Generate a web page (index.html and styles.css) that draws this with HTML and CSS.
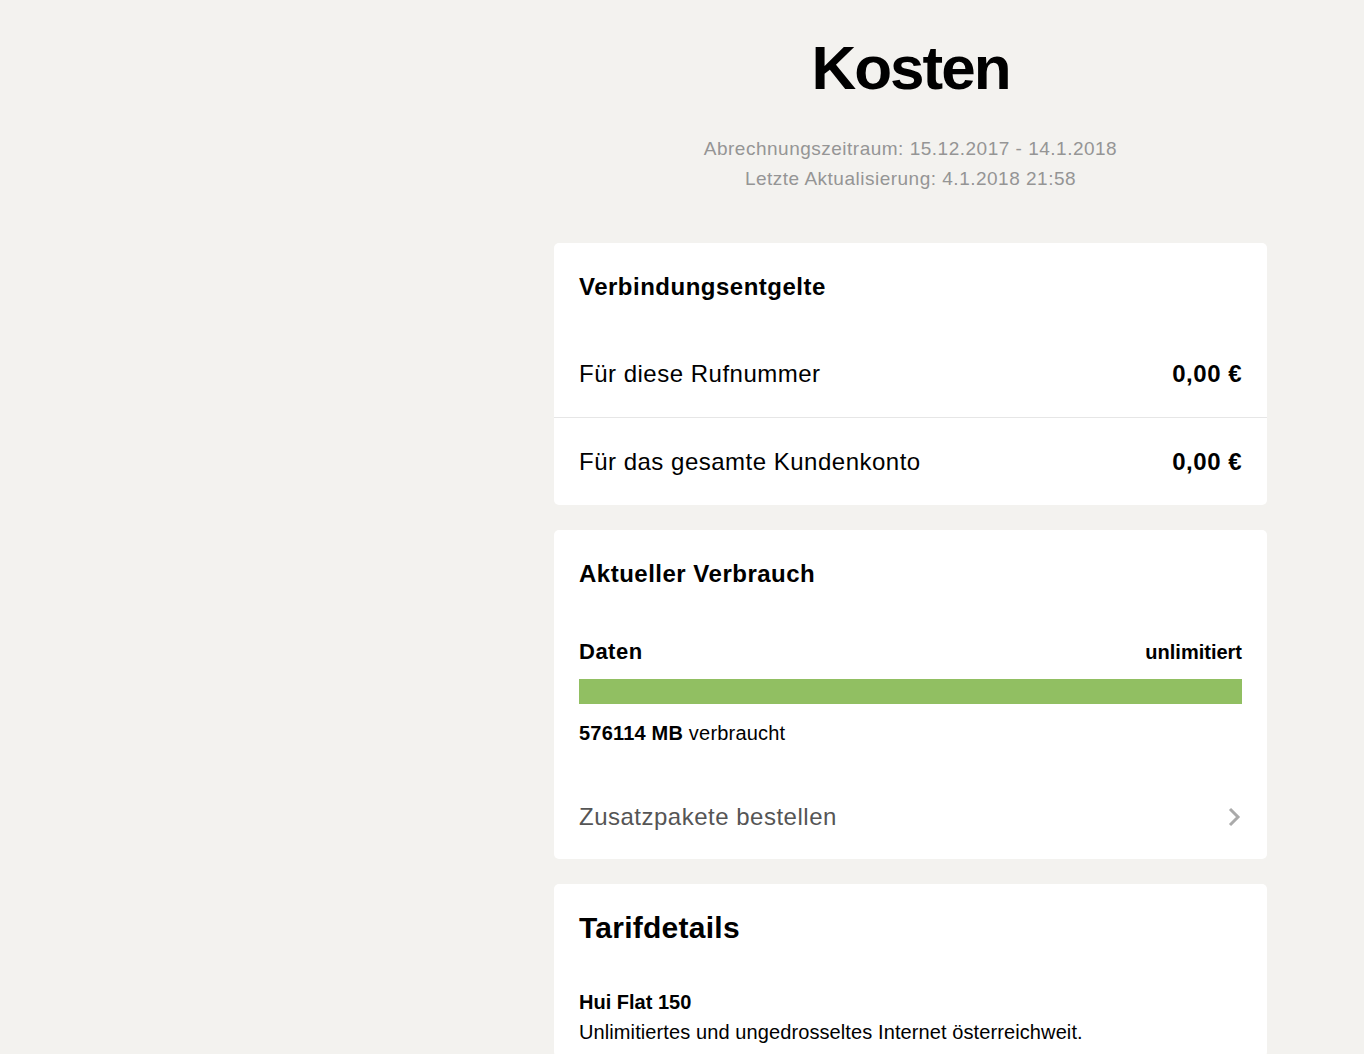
FILE: index.html
```html
<!DOCTYPE html>
<html>
<head lang="de">
  <meta charset="UTF-8">
  <title>Kosten</title>
  <link rel="stylesheet" href="styles.css">
</head>
<body>
  <div class="page">
    <div class="side"></div>
    <div class="main">
      <div class="header">
        <h1>Kosten</h1>
        <p>Abrechnungszeitraum: 15.12.2017 - 14.1.2018</p>
        <p>Letzte Aktualisierung: 4.1.2018 21:58</p>
      </div>

      <!-- Verbindungsentgelte -->
      <div class="card">
        <div class="card-title">Verbindungsentgelte</div>
        <div class="row">
          <span>Für diese Rufnummer</span>
          <b>0,00 €</b>
        </div>
        <div class="row line">
          <span>Für das gesamte Kundenkonto</span>
          <b>0,00 €</b>
        </div>
      </div>

      <!-- Verbrauch -->
      <div class="card">
        <div class="card-title">Aktueller Verbrauch</div>
        <div class="usage">
          <div class="usage-head">
            <span class="usage-name">Daten</span>
            <span class="usage-limit">unlimitiert</span>
          </div>
          <div class="bar"><div class="bar-fill" style="width:100%"></div></div>
          <div class="usage-used"><b>576114 MB</b> verbraucht</div>
        </div>
        <div class="link-row">
          <span>Zusatzpakete bestellen</span>
          <svg width="14" height="20" viewBox="0 0 14 20">
            <polyline points="2,2 10,10 2,18" fill="none" stroke="#aaa" stroke-width="3"/>
          </svg>
        </div>
      </div>

      <!-- Tarif -->
      <div class="card">
        <div class="card-title big">Tarifdetails</div>
        <div class="tarif">
          <div class="tarif-name">Hui Flat 150</div>
          <div>Unlimitiertes und ungedrosseltes Internet österreichweit.</div>
        </div>
      </div>
    </div>
  </div>
</body>
</html>
```

FILE: styles.css
```css
* {
  margin: 0;
  padding: 0;
  box-sizing: border-box;
}
body {
  background: #f3f2ef;
  font-family: "Liberation Sans", Arial, sans-serif;
  color: #000;
  letter-spacing: 0.5px;
}
.page {
  display: flex;
}
.side {
  width: 554px;
  flex-shrink: 0;
}
.main {
  width: 713px;
}
.header {
  text-align: center;
  padding-top: 37px;
  margin-bottom: 49px;
}
.header h1 {
  font-size: 62px;
  line-height: 62px;
  letter-spacing: -2px;
  font-weight: bold;
  margin-bottom: 35px;
}
.header p {
  font-size: 19px;
  line-height: 30px;
  color: #959595;
}
.card {
  background: #fff;
  border-radius: 5px;
  margin-bottom: 25px;
}
.card-title {
  height: 87px;
  display: flex;
  align-items: center;
  padding: 0 25px;
  font-size: 24px;
  font-weight: bold;
}
.card-title.big {
  font-size: 30px;
  letter-spacing: 0.25px;
}
.row {
  height: 87px;
  display: flex;
  align-items: center;
  justify-content: space-between;
  padding: 0 25px;
  font-size: 24px;
}
.row.line {
  height: 88px;
  border-top: 1px solid #e6e6e6;
}
.usage {
  padding: 22px 25px 0;
}
.usage-head {
  display: flex;
  justify-content: space-between;
  align-items: baseline;
  height: 26px;
}
.usage-name {
  font-size: 22px;
  font-weight: bold;
}
.usage-limit {
  font-size: 20px;
  font-weight: bold;
  letter-spacing: 0;
}
.bar {
  margin-top: 14px;
  height: 25px;
  background: #e6e6e6;
}
.bar-fill {
  height: 100%;
  background: #91bf62;
}
.usage-used {
  margin-top: 17px;
  font-size: 20px;
  line-height: 24px;
  letter-spacing: 0.2px;
}
.link-row {
  margin-top: 30px;
  height: 84px;
  display: flex;
  align-items: center;
  justify-content: space-between;
  padding: 0 25px;
  font-size: 24px;
  color: #555;
}
.tarif {
  padding: 16px 25px 10px;
  font-size: 20px;
  line-height: 30px;
  letter-spacing: 0.1px;
}
.tarif-name {
  font-weight: bold;
  letter-spacing: 0;
}
```
